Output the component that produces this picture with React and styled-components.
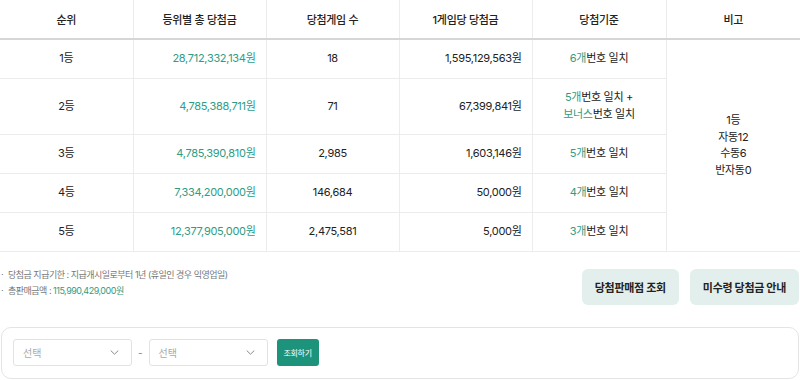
import React from "react";
import styled, { createGlobalStyle } from "styled-components";

const GlobalStyle = createGlobalStyle`
  body {
    margin: 0;
    background: #fff;
    font-family: Inter, "Noto Sans CJK KR", sans-serif;
    color: #222;
  }
`;

const GREEN = "#2f9c83";

const rows = [
  { rank: "1등", total: "28,712,332,134원", games: "18", each: "1,595,129,563원", count: "6", bonus: false },
  { rank: "2등", total: "4,785,388,711원", games: "71", each: "67,399,841원", count: "5", bonus: true },
  { rank: "3등", total: "4,785,390,810원", games: "2,985", each: "1,603,146원", count: "5", bonus: false },
  { rank: "4등", total: "7,334,200,000원", games: "146,684", each: "50,000원", count: "4", bonus: false },
  { rank: "5등", total: "12,377,905,000원", games: "2,475,581", each: "5,000원", count: "3", bonus: false },
];

export default function App() {
  return (
    <Page>
      <GlobalStyle />
      <Table>
        <colgroup>
          <col style={{ width: "133px" }} />
          <col style={{ width: "133px" }} />
          <col style={{ width: "133px" }} />
          <col style={{ width: "133px" }} />
          <col style={{ width: "134px" }} />
          <col />
        </colgroup>
        <thead>
          <tr>
            <Th>순위</Th>
            <Th>등위별 총 당첨금</Th>
            <Th>당첨게임 수</Th>
            <Th>1게임당 당첨금</Th>
            <Th>당첨기준</Th>
            <Th>비고</Th>
          </tr>
        </thead>
        <tbody>
          {rows.map((r, i) => (
            <Tr key={r.rank} $tall={r.bonus}>
              <Td>{r.rank}</Td>
              <Td $align="right" $green>{r.total}</Td>
              <Td>{r.games}</Td>
              <Td $align="right">{r.each}</Td>
              <Td>
                <Green>{r.count}개</Green>번호 일치
                {r.bonus && (
                  <>
                    {" +"}
                    <br />
                    <Green>보너스</Green>번호 일치
                  </>
                )}
              </Td>
              {i === 0 && (
                <Note rowSpan={5}>
                  1등
                  <br />
                  자동12
                  <br />
                  수동6
                  <br />
                  반자동0
                </Note>
              )}
            </Tr>
          ))}
        </tbody>
      </Table>

      <InfoRow>
        <InfoList>
          <li>당첨금 지급기한 : 지급개시일로부터 1년 (휴일인 경우 익영업일)</li>
          <li>
            총판매금액 : <Green>115,990,429,000원</Green>
          </li>
        </InfoList>
        <Actions>
          <SoftButton>당첨판매점 조회</SoftButton>
          <SoftButton>미수령 당첨금 안내</SoftButton>
        </Actions>
      </InfoRow>

      <SearchBox>
        <Select>
          <span>선택</span>
          <Chevron />
        </Select>
        <Dash>-</Dash>
        <Select>
          <span>선택</span>
          <Chevron />
        </Select>
        <SearchButton>조회하기</SearchButton>
      </SearchBox>
    </Page>
  );
}

function Chevron() {
  return (
    <svg width="9" height="5" viewBox="0 0 9 5" fill="none">
      <path d="M1 0.8l3.5 3.4 3.5-3.4" stroke="#888" strokeWidth="1" strokeLinecap="round" strokeLinejoin="round" />
    </svg>
  );
}

const Page = styled.div`
  width: 800px;
  height: 380px;
  overflow: hidden;
`;

const Table = styled.table`
  width: 800px;
  border-collapse: collapse;
  table-layout: fixed;
  font-size: 11px;
  letter-spacing: -0.3px;
`;

const Th = styled.th`
  height: 38px;
  padding: 0;
  font-weight: 500;
  color: #222;
  text-align: center;
  border-bottom: 2px solid #d6d6d6;
  border-left: 1px solid #ececec;
  &:first-child {
    border-left: none;
  }
`;

const Tr = styled.tr`
  height: ${(p) => (p.$tall ? "56px" : "39px")};
`;

const Td = styled.td`
  padding: 0 10px;
  text-align: ${(p) => p.$align || "center"};
  color: ${(p) => (p.$green ? GREEN : "#222")};
  line-height: 17px;
  border-bottom: 1px solid #ececec;
  border-left: 1px solid #ececec;
  &:first-child {
    border-left: none;
  }
`;

const Note = styled.td`
  text-align: center;
  line-height: 16.5px;
  border-left: 1px solid #ececec;
  border-bottom: 1px solid #ececec;
`;

const Green = styled.span`
  color: ${GREEN};
`;

const InfoRow = styled.div`
  display: flex;
  justify-content: space-between;
  align-items: flex-start;
  padding-top: 17px;
`;

const InfoList = styled.ul`
  margin: 0;
  padding: 0 0 0 8px;
  list-style: none;
  font-size: 9px;
  line-height: 16px;
  color: #777;
  letter-spacing: -0.5px;
  li {
    position: relative;
  }
  li:first-child {
    margin-top: -2px;
  }
  li::before {
    content: "·";
    position: absolute;
    left: -7px;
  }
`;

const Actions = styled.div`
  display: flex;
  gap: 11px;
  padding-right: 1px;
`;

const SoftButton = styled.button`
  height: 36px;
  padding: 0 13px;
  border: none;
  border-radius: 6px;
  background: #e3efec;
  color: #222;
  font-family: inherit;
  font-size: 11px;
  font-weight: 700;
  letter-spacing: -0.3px;
`;

const SearchBox = styled.div`
  margin: 22px 1px 0 1px;
  height: 50px;
  border: 1px solid #e4e4e4;
  border-radius: 10px;
  display: flex;
  align-items: center;
  padding: 0 11px;
  gap: 6px;
`;

const Select = styled.div`
  width: 119px;
  height: 27px;
  box-sizing: border-box;
  border: 1px solid #e2e2e2;
  border-radius: 3px;
  display: flex;
  align-items: center;
  justify-content: space-between;
  padding: 0 12px 0 9px;
  font-size: 10px;
  color: #aaa;
`;

const Dash = styled.span`
  font-size: 10px;
  color: #888;
`;

const SearchButton = styled.button`
  margin-left: 3px;
  height: 27px;
  width: 42px;
  padding: 0;
  border: none;
  border-radius: 3px;
  background: #1d937b;
  color: #fff;
  font-family: inherit;
  font-size: 8px;
  letter-spacing: -0.3px;
`;
